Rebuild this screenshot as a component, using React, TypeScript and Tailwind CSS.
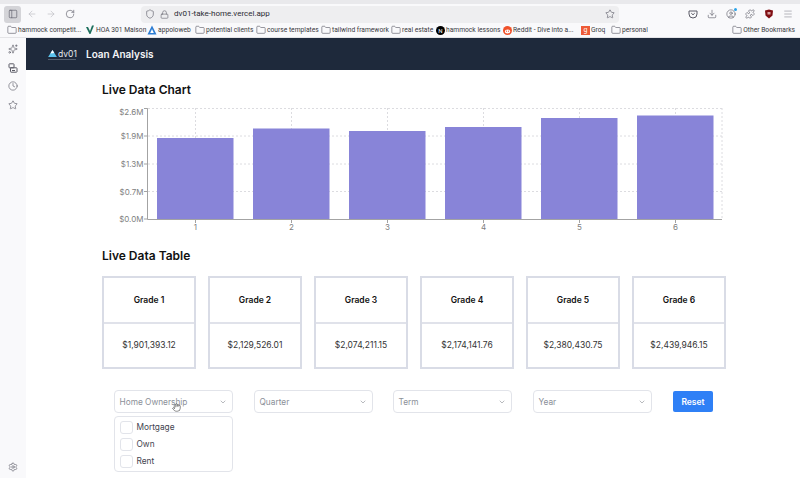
import React from "react";
import {
  ArrowLeft,
  ArrowRight,
  ChevronDown,
  Clock,
  Download,
  Folder,
  Hand,
  Lock,
  Menu,
  PanelLeft,
  Puzzle,
  RotateCw,
  Settings,
  Shield,
  Sparkles,
  Star,
  UserCircle,
} from "lucide-react";

const FONT = "font-['Inter','Liberation_Sans',sans-serif]";
const CHROME_FONT = "font-['Roboto','Liberation_Sans',sans-serif]";

// ── Browser chrome ───────────────────────────────────────────────────────────

const BOOKMARKS = [
  { label: "hammock competit...", icon: "folder", cls: "w-[78px]" },
  { label: "HOA 301 Maison", icon: "check", cls: "w-[62px]" },
  { label: "appoloweb", icon: "tri", cls: "w-[48px]" },
  { label: "potential clients", icon: "folder", cls: "w-[61px]" },
  { label: "course templates", icon: "folder", cls: "w-[65px]" },
  { label: "tailwind framework", icon: "folder", cls: "w-[70px]" },
  { label: "real estate", icon: "folder", cls: "w-[45px]" },
  { label: "hammock lessons", icon: "notion", cls: "w-[67px]" },
  { label: "Reddit - Dive into a...", icon: "reddit", cls: "w-[78px]" },
  { label: "Groq", icon: "groq", cls: "w-[30px]" },
  { label: "personal", icon: "folder", cls: "w-[40px]" },
];

function BookmarkIcon({ kind }: { kind: string }) {
  switch (kind) {
    case "check":
      return (
        <svg viewBox="0 0 10 10" className="w-[10px] h-[10px] shrink-0">
          <path d="M1 2 L4.5 9 L5.5 9 L9 0.5 L7 0.5 L5 6 L3 2 Z" fill="#1d6f5c" />
        </svg>
      );
    case "tri":
      return (
        <svg viewBox="0 0 10 10" className="w-[10px] h-[10px] shrink-0">
          <path d="M5 0.5 L9.5 9.5 L0.5 9.5 Z" fill="#2b7cd3" />
          <path d="M5 4 L6.8 8 L3.2 8 Z" fill="#ffffff" />
        </svg>
      );
    case "notion":
      return (
        <span className="w-[9px] h-[9px] shrink-0 rounded-full bg-black text-white text-[6px] leading-[9px] text-center">N</span>
      );
    case "reddit":
      return (
        <svg viewBox="0 0 10 10" className="w-[9px] h-[9px] shrink-0">
          <circle cx="5" cy="5" r="5" fill="#f0512a" />
          <ellipse cx="5" cy="6" rx="3" ry="2.2" fill="#ffffff" />
          <circle cx="3.9" cy="5.7" r="0.6" fill="#f0512a" />
          <circle cx="6.1" cy="5.7" r="0.6" fill="#f0512a" />
        </svg>
      );
    case "groq":
      return (
        <span className="w-[9px] h-[9px] shrink-0 bg-[#ee5a36] text-white text-[7px] leading-[9px] text-center">g</span>
      );
    default:
      return <Folder className="w-[10px] h-[10px] shrink-0 text-[#5b5b66]" strokeWidth={1.5} />;
  }
}

function BrowserChrome() {
  return (
    <div className={CHROME_FONT}>
      <div className="h-[4px] bg-[#e9e9ec]" />
      <div className="h-[20px] bg-[#f9f9fb] flex items-center pl-[4px] text-[#5b5b66]">
        <div className="w-[17px] h-[17px] rounded-[3px] bg-[#d4d4d8] flex items-center justify-center shrink-0">
          <PanelLeft className="w-[10px] h-[10px]" strokeWidth={1.5} />
        </div>
        <ArrowLeft className="w-[10px] h-[10px] ml-[6px] text-[#b8b8bf]" strokeWidth={1.5} />
        <ArrowRight className="w-[10px] h-[10px] ml-[9px] text-[#b8b8bf]" strokeWidth={1.5} />
        <RotateCw className="w-[10px] h-[10px] ml-[9px]" strokeWidth={1.5} />
        <div className="w-[478px] h-[17px] ml-[66px] rounded-[4px] bg-[#eeeef0] flex items-center pl-[4px] pr-[4px] shrink-0">
          <Shield className="w-[10px] h-[10px]" strokeWidth={1.5} />
          <Lock className="w-[9px] h-[9px] ml-[5px]" strokeWidth={1.5} />
          <span className="ml-[5px] text-[8px] text-[#2b2b33]">dv01-take-home.vercel.app</span>
          <Star className="w-[10px] h-[10px] ml-auto" strokeWidth={1.5} />
        </div>
        <div className="flex-1 flex items-center justify-end pr-[7px] gap-[9px]">
          <svg viewBox="0 0 10 10" className="w-[10px] h-[10px]" fill="none" stroke="currentColor" strokeWidth="1">
            <path d="M1 2 H9 V5 A4 4 0 0 1 1 5 Z" />
            <path d="M3.3 4.2 L5 5.8 L6.7 4.2" />
          </svg>
          <Download className="w-[10px] h-[10px]" strokeWidth={1.5} />
          <div className="relative">
            <UserCircle className="w-[10px] h-[10px]" strokeWidth={1.5} />
            <span className="absolute -top-[1px] -right-[1px] w-[3px] h-[3px] rounded-full bg-[#29a3e8]" />
          </div>
          <Puzzle className="w-[10px] h-[10px]" strokeWidth={1.5} />
          <svg viewBox="0 0 10 10" className="w-[10px] h-[10px]">
            <path d="M1 1.5 L5 0.5 L9 1.5 L8.5 6.5 L5 9.5 L1.5 6.5 Z" fill="#800f14" />
            <rect x="3.5" y="3" width="3" height="2.5" fill="#d8a0a0" />
          </svg>
          <Menu className="w-[10px] h-[10px] text-[#8f8f98]" strokeWidth={1.5} />
        </div>
      </div>
      <div className="h-[13px] bg-[#f9f9fb] flex items-center pl-[7px] text-[6.7px] text-[#3a3a42]">
        {BOOKMARKS.map((b) => (
          <div key={b.label} className={`flex items-center gap-[1px] whitespace-nowrap shrink-0 ${b.cls}`}>
            <BookmarkIcon kind={b.icon} />
            <span>{b.label}</span>
          </div>
        ))}
        <div className="ml-auto pr-[5px] flex items-center gap-[1px] whitespace-nowrap">
          <Folder className="w-[10px] h-[10px] text-[#5b5b66]" strokeWidth={1.5} />
          <span>Other Bookmarks</span>
        </div>
      </div>
      <div className="h-[1px] bg-[#e4e4e7]" />
    </div>
  );
}

function Sidebar() {
  return (
    <div className="w-[26px] shrink-0 bg-[#f9f9fb] flex flex-col items-center justify-between pt-[6px] pb-[6px] text-[#5b5b66]">
      <div className="flex flex-col items-center gap-[8.7px]">
        <Sparkles className="w-[10px] h-[10px]" strokeWidth={1.5} />
        <svg viewBox="0 0 10 10" className="w-[10px] h-[10px]" fill="none" stroke="currentColor" strokeWidth="1">
          <rect x="1" y="0.8" width="5" height="4" rx="0.6" />
          <rect x="2.5" y="4.8" width="6.5" height="4.4" rx="0.6" />
          <path d="M4 7.5 H7" />
        </svg>
        <Clock className="w-[10px] h-[10px]" strokeWidth={1.5} />
        <Star className="w-[10px] h-[10px]" strokeWidth={1.5} />
      </div>
      <Settings className="w-[10px] h-[10px]" strokeWidth={1.5} />
    </div>
  );
}

// ── Chart ────────────────────────────────────────────────────────────────────

const BARS = [
  { x: 157, top: 138 },
  { x: 253, top: 128.5 },
  { x: 349, top: 131 },
  { x: 445, top: 127 },
  { x: 541, top: 118 },
  { x: 637, top: 115.5 },
];
const Y_TICKS = [
  { y: 108.5, label: "$2.6M" },
  { y: 136, label: "$1.9M" },
  { y: 164, label: "$1.3M" },
  { y: 191.5, label: "$0.7M" },
  { y: 219, label: "$0.0M" },
];

// svg spans x 102..730, y 100..240 of the page
function Chart() {
  return (
    <svg viewBox="102 100 628 140" className="w-[628px] h-[140px] mt-[1px] block">
      <g stroke="#dcdce0" strokeWidth="1" strokeDasharray="2 2" fill="none">
        {Y_TICKS.slice(0, 4).map((t) => (
          <line key={t.y} x1="148" x2="722" y1={t.y} y2={t.y} />
        ))}
        {BARS.map((b) => (
          <line key={b.x} x1={b.x + 38.5} x2={b.x + 38.5} y1="108" y2="219" />
        ))}
        <line x1="722" x2="722" y1="108" y2="219" />
      </g>
      {BARS.map((b) => (
        <rect key={b.x} x={b.x} y={b.top} width="76.5" height={219 - b.top} fill="#8884d8" />
      ))}
      <path d="M144 108.5 H147.5 V219.5 H722" fill="none" stroke="#a3a3a3" strokeWidth="1" />
      <g stroke="#a3a3a3" strokeWidth="1">
        {Y_TICKS.map((t) => (
          <line key={t.y} x1="144" x2="147.5" y1={t.y} y2={t.y} />
        ))}
        {BARS.map((b) => (
          <line key={b.x} x1={b.x + 38.5} x2={b.x + 38.5} y1="219.5" y2="223" />
        ))}
      </g>
      <g fontFamily="Inter, 'Liberation Sans', sans-serif" fontSize="8" fill="#808080">
        {Y_TICKS.map((t) => (
          <text key={t.y} x="143.5" y={t.y < 110 ? 115 : t.y + 3} textAnchor="end">
            {t.label}
          </text>
        ))}
        {BARS.map((b, i) => (
          <text key={b.x} x={b.x + 38.5} y="230" textAnchor="middle">
            {i + 1}
          </text>
        ))}
      </g>
    </svg>
  );
}

// ── Table + filters ──────────────────────────────────────────────────────────

const GRADES = [
  { name: "Grade 1", value: "$1,901,393.12" },
  { name: "Grade 2", value: "$2,129,526.01" },
  { name: "Grade 3", value: "$2,074,211.15" },
  { name: "Grade 4", value: "$2,174,141.76" },
  { name: "Grade 5", value: "$2,380,430.75" },
  { name: "Grade 6", value: "$2,439,946.15" },
];

function GradeCard({ name, value }: { name: string; value: string }) {
  return (
    <div className="w-[94px] h-[93px] border-2 border-[#d9dce6] flex flex-col">
      <div className="h-[46px] border-b-2 border-[#e0e2ea] flex items-center justify-center text-[8.5px] font-semibold text-[#111]">
        {name}
      </div>
      <div className="flex-1 flex items-center justify-center text-[8.5px] text-[#333]">{value}</div>
    </div>
  );
}

function Select({ label, children }: { label: string; children?: React.ReactNode }) {
  return (
    <div className="relative w-[119px] shrink-0">
      <div className="h-[23px] rounded-[4px] border border-[#e2e4ea] flex items-center pl-[4.5px] pr-[5px] pt-[1px] text-[8.3px] text-[#8b8f98]">
        <span>{label}</span>
        <ChevronDown className="w-[8px] h-[8px] ml-auto text-[#85888f]" strokeWidth={1.75} />
      </div>
      {children}
    </div>
  );
}

const OWNERSHIP = ["Mortgage", "Own", "Rent"];

export default function App() {
  return (
    <div className={`w-[800px] h-[478px] overflow-hidden flex flex-col bg-white ${FONT}`}>
      <BrowserChrome />
      <div className="flex-1 flex min-h-0">
        <Sidebar />
        <div className="flex-1 min-w-0 flex flex-col">
          <div className="h-[32px] bg-[#1e293b] flex items-center pl-[22px] shrink-0">
            <div className="w-[38px] flex flex-col">
              <div className="flex items-center gap-[1px]">
                <svg viewBox="0 0 10 8" className="w-[9px] h-[7px]">
                  <path d="M5 0 L10 8 L0 8 Z" fill="#5cc4ee" />
                  <path d="M5 0 L7 3.5 L2.5 4 Z" fill="#ffffff" />
                </svg>
                <span className="text-[8.5px] leading-[10px] text-[#e6e9ee]">dv01</span>
              </div>
              <div className="h-[1px] w-[28px] bg-[#55606f]" />
            </div>
            <span className="text-[10px] font-semibold text-[#f4f5f7]">Loan Analysis</span>
          </div>

          <div className="pl-[76px] pt-[11px] flex-1">
            <h2 className="text-[12px] leading-[18px] font-semibold text-[#111]">Live Data Chart</h2>
            <Chart />
            <h2 className="text-[12px] leading-[18px] font-semibold text-[#111] mt-[7px]">Live Data Table</h2>
            <div className="flex gap-[12px] mt-[11px]">
              {GRADES.map((g) => (
                <GradeCard key={g.name} name={g.name} value={g.value} />
              ))}
            </div>
            <div className="flex mt-[21px] ml-[12px]">
              <Select label="Home Ownership">
                <Hand className="absolute left-[58px] top-[13px] w-[9px] h-[9px] text-[#333] fill-white" strokeWidth={1.5} />
                <div className="absolute top-[26px] left-0 w-[119px] h-[56px] rounded-[4px] border border-[#e2e4ea] bg-white flex flex-col justify-center gap-[3px] pl-[4.5px] pt-[1px]">
                  {OWNERSHIP.map((o) => (
                    <div key={o} className="flex items-center gap-[4px] text-[8.3px] text-[#3f4450] h-[14px]">
                      <span className="w-[13px] h-[13px] rounded-[3px] border border-[#e2e4ea]" />
                      {o}
                    </div>
                  ))}
                </div>
              </Select>
              <div className="w-[21px] shrink-0" />
              <Select label="Quarter" />
              <div className="w-[20px] shrink-0" />
              <Select label="Term" />
              <div className="w-[21px] shrink-0" />
              <Select label="Year" />
              <button className="ml-[21px] mt-[1px] pt-[1px] w-[40px] h-[21px] rounded-[2px] bg-[#2f80f6] text-white text-[8.5px] font-semibold">
                Reset
              </button>
            </div>
          </div>
        </div>
      </div>
    </div>
  );
}
